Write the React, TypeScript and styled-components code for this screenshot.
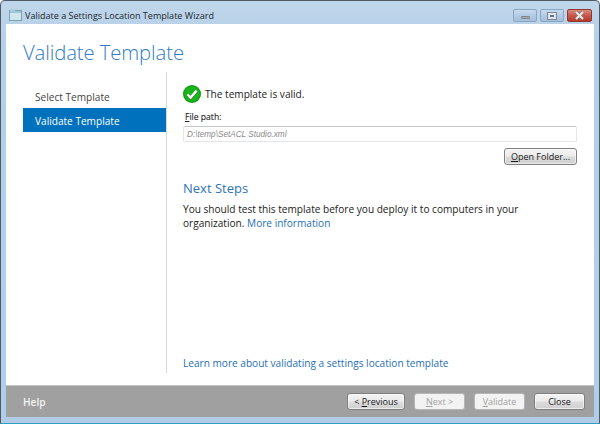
import React from "react";
import styled, { createGlobalStyle } from "styled-components";

const GlobalStyle = createGlobalStyle`
  html, body {
    margin: 0;
    padding: 0;
    width: 600px;
    height: 424px;
    overflow: hidden;
    background: #fff;
  }
  body {
    font-family: "Open Sans", "Noto Sans", "Liberation Sans", sans-serif;
    color: #1e1e1e;
  }
`;

const Frame = styled.div`
  box-sizing: border-box;
  width: 600px;
  height: 424px;
  display: flex;
  flex-direction: column;
  padding: 1px 5px 6px;
  border: 1px solid #4e5a66;
  border-bottom-color: #2f9fc4;
  border-radius: 5px 5px 0 0;
  background: linear-gradient(180deg, #c0d6ea 0%, #b4cfe8 10%, #b2cde8 100%);
`;

const TitleBar = styled.div`
  box-sizing: border-box;
  height: 22px;
  flex: none;
  display: flex;
  align-items: center;
  gap: 3px;
  padding: 4px 0 0 3px;
`;

const TitleText = styled.span`
  font-size: 9.05px;
  color: #20282f;
  flex: 1;
  white-space: nowrap;
`;

const CaptionButtons = styled.div`
  display: flex;
  gap: 3px;
  align-self: flex-start;
  margin-top: 3px;
  margin-right: 2px;
`;

const CaptionButton = styled.div<{ $close?: boolean }>`
  box-sizing: border-box;
  width: ${(p) => (p.$close ? "25px" : "24px")};
  height: 13px;
  display: flex;
  align-items: center;
  justify-content: center;
  border: 1px solid ${(p) => (p.$close ? "#8e3a30" : "#8ba6c2")};
  border-radius: 2px;
  background: ${(p) =>
    p.$close
      ? "linear-gradient(180deg, #d98a7e 0%, #c8584a 50%, #b8382c 100%)"
      : "linear-gradient(180deg, #c8dbee 0%, #b2cbe4 50%, #a6c0da 100%)"};
`;

const MinGlyph = styled.div`
  width: 9px;
  height: 3px;
  margin-top: 3px;
  background: #a5a8ac;
  border: 1px solid #7d8791;
  border-radius: 1px;
  box-sizing: border-box;
`;

const MaxGlyph = styled.div`
  box-sizing: border-box;
  width: 10px;
  height: 8px;
  padding: 2px;
  background: #dfe6ed;
  border: 1px solid #7d8791;
  &::after {
    content: "";
    display: block;
    width: 4px;
    height: 2px;
    background: #5f7287;
  }
`;

const Client = styled.div`
  flex: 1;
  min-height: 0;
  display: flex;
  flex-direction: column;
  background: #fff;
`;

const Heading = styled.h1`
  margin: 0;
  padding: 14px 0 0 17px;
  height: 34px;
  flex: none;
  font-size: 20.3px;
  line-height: 28px;
  font-weight: 300;
  color: #2f7cc4;
  letter-spacing: -0.1px;
`;

const Body = styled.div`
  flex: 1;
  min-height: 0;
  display: flex;
  padding-bottom: 12px;
`;

const Sidebar = styled.nav`
  box-sizing: border-box;
  width: 144px;
  margin-left: 17px;
  padding-top: 12px;
  border-right: 1px solid #d8d8d8;
  display: flex;
  flex-direction: column;
`;

const NavItem = styled.div<{ $active?: boolean }>`
  height: 24px;
  line-height: 26px;
  padding-left: 12px;
  font-size: 10.1px;
  color: ${(p) => (p.$active ? "#fff" : "#444")};
  background: ${(p) => (p.$active ? "#0071bc" : "transparent")};
`;

const Main = styled.main`
  flex: 1;
  min-width: 0;
  display: flex;
  flex-direction: column;
  padding: 13px 17px 3px 16px;
`;

const Status = styled.div`
  display: flex;
  align-items: center;
  gap: 4px;
  height: 18px;
  font-size: 10.1px;
  color: #222;
`;

const FieldLabel = styled.label`
  margin: 7px 0 2px;
  padding-left: 2px;
  height: 14px;
  line-height: 14px;
  font-size: 8.6px;
  color: #222;
  -webkit-text-stroke: 0.1px #222;
`;

const Key = styled.span`
  text-decoration: underline;
`;

const PathInput = styled.div`
  box-sizing: border-box;
  height: 16px;
  line-height: 15px;
  padding-left: 3px;
  font-family: "Liberation Sans", sans-serif;
  font-size: 8.2px;
  font-style: italic;
  color: #8a8a8a;
  border: 1px solid #e2e6ea;
  border-top-color: #c4c8cc;
  border-radius: 2px;
  background: #fff;
`;

const ButtonRow = styled.div`
  display: flex;
  justify-content: flex-end;
  margin-top: 6px;
`;

const Button = styled.button<{ $width: number }>`
  box-sizing: border-box;
  width: ${(p) => p.$width}px;
  height: 17px;
  padding: 0;
  font-family: inherit;
  font-size: 9px;
  line-height: 15px;
  color: #1a1a1a;
  border: 1px solid #7f7f7f;
  border-radius: 3px;
  background: linear-gradient(180deg, #f4f4f4 0%, #ebebeb 48%, #dcdcdc 52%, #cfcfcf 100%);
  box-shadow: inset 0 0 0 1px rgba(255, 255, 255, 0.6);
  &:disabled {
    color: #a2a2a2;
    border-color: #b5b5b5;
    background: #f3f3f3;
    box-shadow: none;
  }
`;

const SubHeading = styled.h2`
  margin: 13px 0 0;
  height: 20px;
  line-height: 20px;
  font-size: 13px;
  font-weight: 400;
  color: #2f74b8;
`;

const Paragraph = styled.p`
  margin: 4px 0 0;
  font-size: 10.1px;
  line-height: 14px;
  color: #222;
`;

const Link = styled.a`
  color: #1f6fb5;
  text-decoration: none;
`;

const BottomLink = styled(Link)`
  margin-top: auto;
  font-size: 10.1px;
  line-height: 14px;
`;

const Footer = styled.footer`
  flex: none;
  height: 32px;
  box-sizing: border-box;
  display: flex;
  align-items: center;
  justify-content: space-between;
  padding: 0 9px 0 17px;
  background: #a0a0a0;
  border-top: 1px solid #c4c4c4;
`;

const HelpText = styled.span`
  font-size: 10.1px;
  font-weight: 600;
  color: #f4f4f4;
`;

const FooterButtons = styled.div`
  display: flex;
  gap: 9px;
`;

function WindowIcon() {
  return (
    <svg width="13" height="12" viewBox="0 0 13 12">
      <rect x="0.5" y="1.5" width="12" height="10" fill="#cfe6ef" stroke="#7f9fb0" />
      <rect x="1" y="2" width="11" height="2" fill="#9cc8dc" />
      <rect x="1" y="0" width="5" height="2" fill="#a9cfe0" />
    </svg>
  );
}

function CheckIcon() {
  return (
    <svg width="18" height="18" viewBox="0 0 18 18">
      <circle cx="9" cy="9" r="9" fill="#0e9a12" />
      <circle cx="9" cy="9" r="7.8" fill="#1cb41c" />
      <path d="M4.2 9.2 L7.6 12.8 L13.8 5.6" fill="none" stroke="#0c7f10" strokeWidth="3.2" />
      <path d="M4.4 9.2 L7.6 12.6 L13.6 5.6" fill="none" stroke="#fff" strokeWidth="2.4" />
    </svg>
  );
}

function CloseGlyph() {
  return (
    <svg width="11" height="9" viewBox="0 0 11 9">
      <path d="M2 1 L9 8 M9 1 L2 8" stroke="#7d6a68" strokeWidth="3.4" />
      <path d="M2 1 L9 8 M9 1 L2 8" stroke="#ece6e4" strokeWidth="2.2" />
    </svg>
  );
}

export default function App() {
  return (
    <>
      <GlobalStyle />
      <Frame>
        <TitleBar>
          <WindowIcon />
          <TitleText>Validate a Settings Location Template Wizard</TitleText>
          <CaptionButtons>
            <CaptionButton>
              <MinGlyph />
            </CaptionButton>
            <CaptionButton>
              <MaxGlyph />
            </CaptionButton>
            <CaptionButton $close>
              <CloseGlyph />
            </CaptionButton>
          </CaptionButtons>
        </TitleBar>
        <Client>
          <Heading>Validate Template</Heading>
          <Body>
            <Sidebar>
              <NavItem>Select Template</NavItem>
              <NavItem $active>Validate Template</NavItem>
            </Sidebar>
            <Main>
              <Status>
                <CheckIcon />
                The template is valid.
              </Status>
              <FieldLabel>
                <Key>F</Key>ile path:
              </FieldLabel>
              <PathInput>D:\temp\SetACL Studio.xml</PathInput>
              <ButtonRow>
                <Button $width={73}>
                  <Key>O</Key>pen Folder...
                </Button>
              </ButtonRow>
              <SubHeading>Next Steps</SubHeading>
              <Paragraph>
                You should test this template before you deploy it to computers in your organization.{" "}
                <Link>More information</Link>
              </Paragraph>
              <BottomLink>Learn more about validating a settings location template</BottomLink>
            </Main>
          </Body>
          <Footer>
            <HelpText>Help</HelpText>
            <FooterButtons>
              <Button $width={58}>
                &lt; <Key>P</Key>revious
              </Button>
              <Button $width={51} disabled>
                <Key>N</Key>ext &gt;
              </Button>
              <Button $width={51} disabled>
                <Key>V</Key>alidate
              </Button>
              <Button $width={51}>Close</Button>
            </FooterButtons>
          </Footer>
        </Client>
      </Frame>
    </>
  );
}
